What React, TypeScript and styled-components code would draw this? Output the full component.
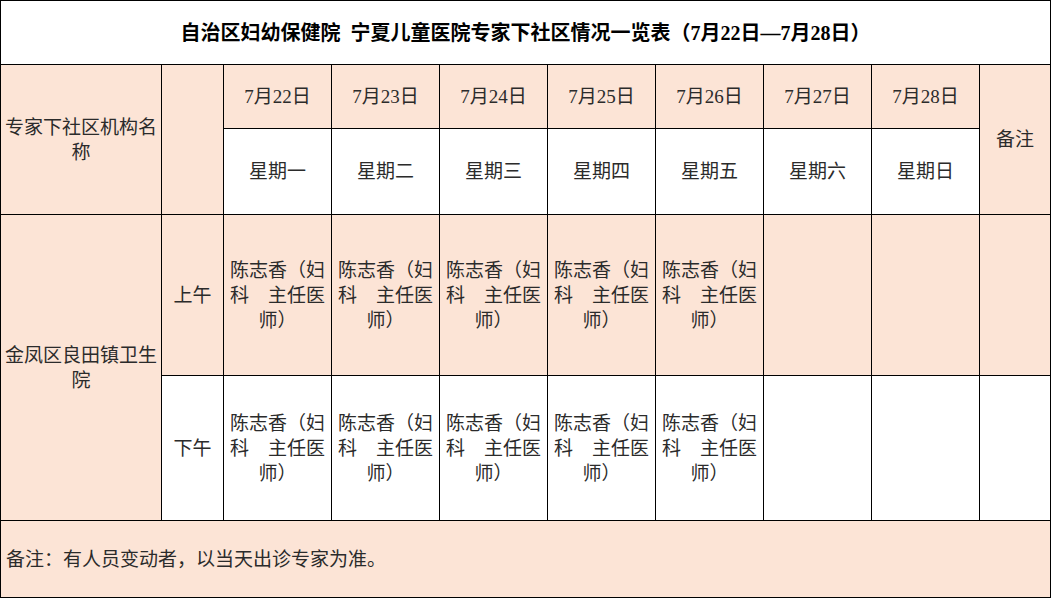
import styled, { createGlobalStyle } from "styled-components";

const GlobalStyle = createGlobalStyle`
  html, body {
    margin: 0;
    padding: 0;
    background: #ffffff;
  }
  body {
    font-family: "Liberation Serif", "Noto Sans CJK SC", serif;
    color: #2b2b2b;
  }
`;

const Sheet = styled.table`
  border-collapse: collapse;
  table-layout: fixed;
  width: 1050px;
  font-size: 19px;
`;

const Col = styled.col<{ $w: number }>`
  width: ${(props) => props.$w}px;
`;

const Row = styled.tr<{ $h: number }>`
  height: ${(props) => props.$h}px;
`;

const Cell = styled.td<{ $fill?: boolean; $left?: boolean }>`
  border: 1px solid #000;
  padding: 0 5px;
  background-color: ${(props) => (props.$fill ? "#fce4d6" : "#ffffff")};
  text-align: ${(props) => (props.$left ? "left" : "center")};
  vertical-align: middle;
  line-height: 25px;
  font-weight: 400;
  white-space: pre-wrap;
  word-break: break-all;
`;

const NameCell = styled(Cell)`
  padding: 0 2px;
`;

const TitleCell = styled(Cell)`
  font-size: 20px;
  font-weight: 700;
  color: #000;
  padding-top: 1px;
`;

const NoteCell = styled(Cell)`
  padding: 0 5px;
`;

const dates = ["7月22日", "7月23日", "7月24日", "7月25日", "7月26日", "7月27日", "7月28日"];
const weekdays = ["星期一", "星期二", "星期三", "星期四", "星期五", "星期六", "星期日"];
const doctor = "陈志香（妇科\u3000主任医师）";
const onDuty = [true, true, true, true, true, false, false];

export default function App() {
  return (
    <>
      <GlobalStyle />
      <Sheet>
        <colgroup>
          <Col $w={161} />
          <Col $w={62} />
          {dates.map((d) => (
            <Col key={d} $w={108} />
          ))}
          <Col $w={71} />
        </colgroup>
        <tbody>
          <Row $h={64}>
            <TitleCell colSpan={10}>
              {"自治区妇幼保健院  宁夏儿童医院专家下社区情况一览表（7月22日—7月28日）"}
            </TitleCell>
          </Row>
          <Row $h={64}>
            <NameCell $fill rowSpan={2}>
              专家下社区机构名称
            </NameCell>
            <Cell $fill rowSpan={2} />
            {dates.map((d) => (
              <Cell key={d} $fill>
                {d}
              </Cell>
            ))}
            <Cell $fill rowSpan={2}>
              备注
            </Cell>
          </Row>
          <Row $h={86}>
            {weekdays.map((w) => (
              <Cell key={w}>{w}</Cell>
            ))}
          </Row>
          <Row $h={161}>
            <NameCell $fill rowSpan={2}>
              金凤区良田镇卫生院
            </NameCell>
            <Cell $fill>上午</Cell>
            {onDuty.map((on, i) => (
              <Cell key={i} $fill>
                {on ? doctor : ""}
              </Cell>
            ))}
            <Cell $fill />
          </Row>
          <Row $h={145}>
            <Cell>下午</Cell>
            {onDuty.map((on, i) => (
              <Cell key={i}>{on ? doctor : ""}</Cell>
            ))}
            <Cell />
          </Row>
          <Row $h={77}>
            <NoteCell $fill $left colSpan={10}>
              备注：有人员变动者，以当天出诊专家为准。
            </NoteCell>
          </Row>
        </tbody>
      </Sheet>
    </>
  );
}
